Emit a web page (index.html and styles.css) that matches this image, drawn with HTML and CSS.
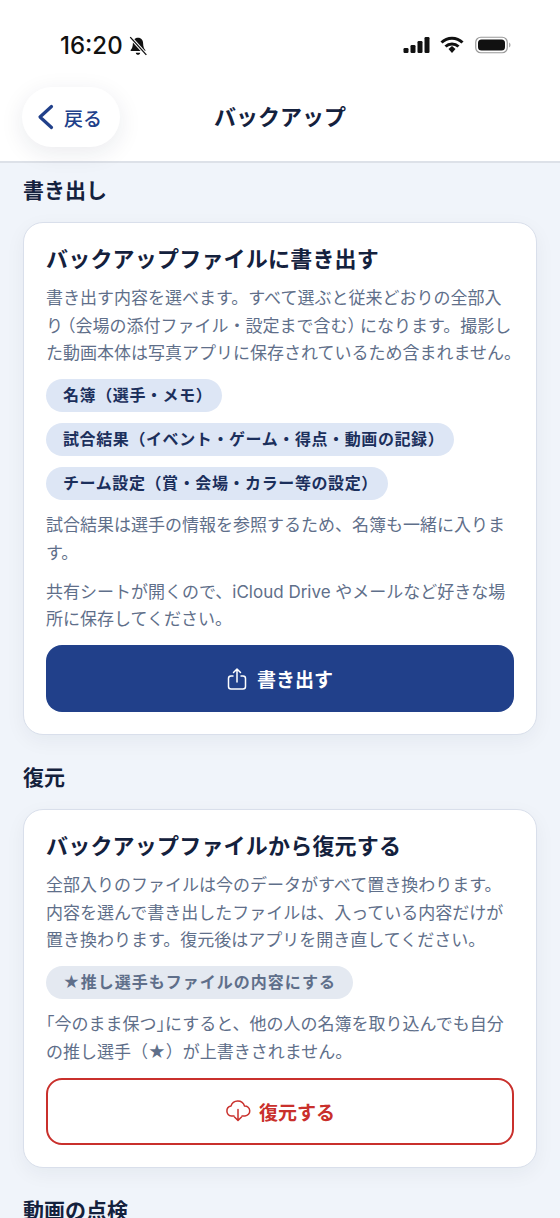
FILE: index.html
```html
<!DOCTYPE html>
<html lang="ja">
<head>
  <meta charset="UTF-8">
  <meta name="viewport" content="width=device-width, initial-scale=1.0">
  <title>バックアップ</title>
  <link rel="stylesheet" href="styles.css">
</head>
<body>

<header class="top-header">
  <div class="status-bar">
    <div class="status-left">
      <span class="status-time">16:20</span>
      <svg class="bell-icon" width="20" height="20" viewBox="0 0 18 18">
        <path d="M9 1.500c-3 0-4.600 2.300-4.600 5 0 3.200-.9 4.800-2 6.200v.8h13.200v-.8c-1.100-1.400-2-3-2-6.200 0-2.700-1.600-5-4.600-5z" fill="#111"/>
        <path d="M7 15h4c-.2 1.200-1 1.800-2 1.800s-1.800-.6-2-1.800z" fill="#111"/>
        <path d="M2 1l14.500 16" stroke="#fff" stroke-width="3"/>
        <path d="M2 1l14.500 16" stroke="#111" stroke-width="1.200"/>
      </svg>
    </div>
    <div class="status-right">
      <svg width="27" height="18" viewBox="0 0 26 18">
        <rect x="0" y="12" width="5" height="5" rx="1.200" fill="#111"/>
        <rect x="7" y="9" width="5" height="8" rx="1.200" fill="#111"/>
        <rect x="14" y="5" width="5" height="12" rx="1.200" fill="#111"/>
        <rect x="21" y="1" width="5" height="16" rx="1.200" fill="#111"/>
      </svg>
      <svg width="24" height="18" viewBox="0 0 24 18">
        <path d="M1.500 6.500a15 15 0 0 1 21 0" fill="none" stroke="#111" stroke-width="3"/>
        <path d="M5.500 10.500a9.500 9.500 0 0 1 13 0" fill="none" stroke="#111" stroke-width="3"/>
        <path d="M8.500 13l3.500-3 3.500 3-3.500 4z" fill="#111"/>
      </svg>
      <svg width="38" height="18" viewBox="0 0 36 18">
        <rect x="0.750" y="1.250" width="31.500" height="15.500" rx="5" fill="none" stroke="#999" stroke-width="1.200"/>
        <rect x="3" y="3.500" width="27" height="11" rx="3.500" fill="#111"/>
        <path d="M34 6.500c1 .4 1.500 1.400 1.500 2.500s-.5 2.100-1.500 2.500z" fill="#aaa"/>
      </svg>
    </div>
  </div>
  <div class="nav-bar">
    <a class="back-btn">
      <svg width="18" height="26" viewBox="0 0 18 26">
        <path d="M15.500 2.500L4 13l11.500 10.500" fill="none" stroke="#21408a" stroke-width="3.200" stroke-linecap="round" stroke-linejoin="round"/>
      </svg>
      <span>戻る</span>
    </a>
    <div class="nav-title">バックアップ</div>
  </div>
</header>

<main class="content">
  <h2 class="section-title">書き出し</h2>
  <section class="card">
    <h3 class="card-title">バックアップファイルに書き出す</h3>
    <p class="card-text">書き出す内容を選べます。すべて選ぶと従来どおりの全部入<br>り<span class="open">（</span>会場の添付ファイル・設定まで含む<span class="close">）</span>になります。撮影し<br>た動画本体は写真アプリに保存されているため含まれません。</p>
    <div class="chip-list">
      <span class="chip chip-trim">名簿（選手・メモ）</span>
      <span class="chip chip-trim">試合結果（イベント・ゲーム・得点・動画の記録）</span>
      <span class="chip chip-trim">チーム設定（賞・会場・カラー等の設定）</span>
    </div>
    <p class="card-text">試合結果は選手の情報を参照するため、名簿も一緒に入りま<br>す。</p>
    <p class="card-text">共有シートが開くので、iCloud Drive やメールなど好きな場<br>所に保存してください。</p>
    <button class="action-btn primary-btn">
      <svg width="20" height="24" viewBox="0 0 20 24" fill="none" stroke="#fff" stroke-width="1.500" stroke-linecap="round" stroke-linejoin="round">
        <path d="M6 9H4a2.500 2.500 0 0 0-2.500 2.500v8A2.500 2.500 0 0 0 4 22h12a2.500 2.500 0 0 0 2.500-2.500v-8A2.500 2.500 0 0 0 16 9h-2"/>
        <path d="M10 15V2M6.500 5.500L10 2l3.500 3.500"/>
      </svg>
      <span>書き出す</span>
    </button>
  </section>

  <h2 class="section-title">復元</h2>
  <section class="card">
    <h3 class="card-title">バックアップファイルから復元する</h3>
    <p class="card-text">全部入りのファイルは今のデータがすべて置き換わります。<br>内容を選んで書き出したファイルは、入っている内容だけが<br>置き換わります。復元後はアプリを開き直してください。</p>
    <div class="chip-list">
      <span class="chip chip-gray">★推し選手もファイルの内容にする</span>
    </div>
    <p class="card-text"><span class="quote">「</span>今のまま保つ<span class="quote">」</span>にすると、他の人の名簿を取り込んでも自分<br>の推し選手（★）が上書きされません。</p>
    <button class="action-btn danger-btn">
      <svg width="26" height="24" viewBox="0 0 26 24" fill="none" stroke="#c9302c" stroke-width="1.500" stroke-linecap="round" stroke-linejoin="round">
        <path d="M9 17H6.500a5 5 0 0 1-.5-9.900A7 7 0 0 1 19.500 7a5 5 0 0 1 .5 10h-3"/>
        <path d="M13 10.500V21M9.500 18l3.500 3.500 3.500-3.500"/>
      </svg>
      <span>復元する</span>
    </button>
  </section>

  <h2 class="section-title">動画の点検</h2>
</main>

</body>
</html>
```

FILE: styles.css
```css
* {
  margin: 0;
  padding: 0;
  box-sizing: border-box;
}

html, body {
  height: 1218px;
  overflow: hidden;
}

body {
  font-family: 'Inter', 'Noto Sans CJK JP', sans-serif;
  background-color: #f0f4fa;
  color: #14213d;
}

/* Header */
.top-header {
  background-color: #fff;
  height: 163px;
  border-bottom: 2px solid #dde1e8;
}

.status-bar {
  height: 87px;
  padding: 31px 48px 0 60px;
  display: flex;
  justify-content: space-between;
  align-items: flex-start;
}

.status-left {
  display: flex;
  align-items: center;
  gap: 5px;
}

.status-time {
  font-size: 24px;
  line-height: 30px;
  font-weight: 500;
  color: #111;
}

.status-right {
  display: flex;
  align-items: center;
  gap: 10px;
  padding-top: 5px;
}

.nav-bar {
  position: relative;
  height: 60px;
  padding-left: 22px;
}

.back-btn {
  position: relative;
  z-index: 1;
  width: 98px;
  height: 60px;
  padding-left: 14px;
  border-radius: 30px;
  background-color: #fff;
  box-shadow: 0 6px 24px rgba(20, 33, 61, 0.09);
  display: flex;
  align-items: center;
  gap: 10px;
  color: #21408a;
  font-size: 19px;
  font-weight: 500;
}

.nav-title {
  position: absolute;
  top: 0;
  left: 0;
  width: 100%;
  line-height: 60px;
  text-align: center;
  font-size: 22px;
  font-weight: 700;
}

/* Sections */
.content {
  padding: 13px 23px 0;
}

.section-title {
  font-size: 21px;
  line-height: 30px;
  font-weight: 700;
  margin-bottom: 16px;
}

.card {
  background-color: #fff;
  border: 1.5px solid #d9dfeb;
  border-radius: 20px;
  padding: 18px 22px 22px;
  margin-bottom: 28px;
  box-shadow: 0 6px 20px rgba(20, 33, 61, 0.05);
}

.card-title {
  font-size: 22px;
  line-height: 36px;
  font-weight: 700;
  letter-spacing: 0.2px;
  margin-bottom: 8px;
}

.card-text {
  font-size: 17px;
  line-height: 27.5px;
  color: #5f6f8a;
  white-space: nowrap;
  margin-bottom: 11.5px;
}

/* Full width brackets sit tighter in the original font */
.open {
  font-feature-settings: "halt";
  margin-left: 4px;
}

.close {
  font-feature-settings: "halt";
  margin-right: 4px;
}

.quote {
  font-feature-settings: "halt";
}

.chip-list {
  display: flex;
  flex-direction: column;
  align-items: flex-start;
  gap: 11px;
  margin-bottom: 12px;
}

.chip {
  height: 33px;
  line-height: 33px;
  padding: 0 17px;
  border-radius: 17px;
  background-color: #dde6f5;
  color: #1b2f5c;
  font-size: 16px;
  font-weight: 700;
}

.chip-trim {
  letter-spacing: 0.6px;
  padding-right: 10px;
}

.chip-gray {
  background-color: #e4e9f1;
  color: #5f6f8a;
  letter-spacing: 1px;
}

.action-btn {
  width: 100%;
  height: 67px;
  border-radius: 16px;
  font-family: inherit;
  font-size: 19px;
  font-weight: 700;
  display: flex;
  align-items: center;
  justify-content: center;
  gap: 10px;
}

.primary-btn {
  background-color: #21408a;
  color: #fff;
  border: none;
}

.danger-btn {
  background-color: #fff;
  color: #c9302c;
  border: 2px solid #c9302c;
  gap: 8px;
}
```
